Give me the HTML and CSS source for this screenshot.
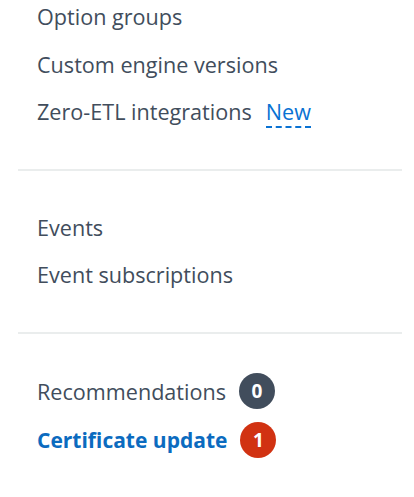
FILE: index.html
```html
<!DOCTYPE html>
<html>
<head>
<meta charset="utf-8">
<link rel="stylesheet" href="styles.css">
</head>
<body>
<nav class="nav">
  <ul class="group group-first">
    <li class="item">Option groups</li>
    <li class="item">Custom engine versions</li>
    <li class="item">Zero-ETL integrations <span class="new">New</span></li>
  </ul>
  <hr class="divider">
  <ul class="group">
    <li class="item">Events</li>
    <li class="item">Event subscriptions</li>
  </ul>
  <hr class="divider">
  <ul class="group group-last">
    <li class="item">Recommendations <span class="badge badge-grey">0</span></li>
    <li class="item item-link">Certificate update <span class="badge badge-red">1</span></li>
  </ul>
</nav>
</body>
</html>
```
FILE: styles.css
```css
html, body {
  margin: 0;
  padding: 0;
  background: #ffffff;
}
body {
  font-family: "Open Sans", "Noto Sans", sans-serif;
  font-size: 21.6px;
  font-weight: 500;
  color: #414d5c;
  width: 414px;
  height: 497px;
  overflow: hidden;
}
.nav {
  display: flex;
  flex-direction: column;
}
.group {
  list-style: none;
  margin: 0;
  padding: 33px 0 33px 37px;
  display: flex;
  flex-direction: column;
}
.group-first {
  margin-top: -40px;
}
.item {
  height: 47.5px;
  display: flex;
  align-items: center;
  white-space: nowrap;
}
.new {
  color: #0972d3;
  margin-left: 14px;
  padding-bottom: 1px;
  border-bottom: 2px dashed #0972d3;
  line-height: 1.2;
  margin-top: 4px;
}
.divider {
  border: 0;
  border-top: 2px solid #eaeded;
  margin: 0 12px 0 18px;
  height: 0;
}
.group-last .item {
  height: 49px;
}
.item-link {
  color: #0b6bbf;
  font-weight: 700;
  font-size: 21px;
}
.badge {
  display: inline-flex;
  align-items: center;
  justify-content: center;
  width: 36px;
  height: 36px;
  border-radius: 50%;
  color: #ffffff;
  font-weight: 700;
  font-size: 19px;
  margin-left: 13px;
}
.badge-grey {
  background: #414d5c;
}
.badge-red {
  background: #d13212;
}
```
